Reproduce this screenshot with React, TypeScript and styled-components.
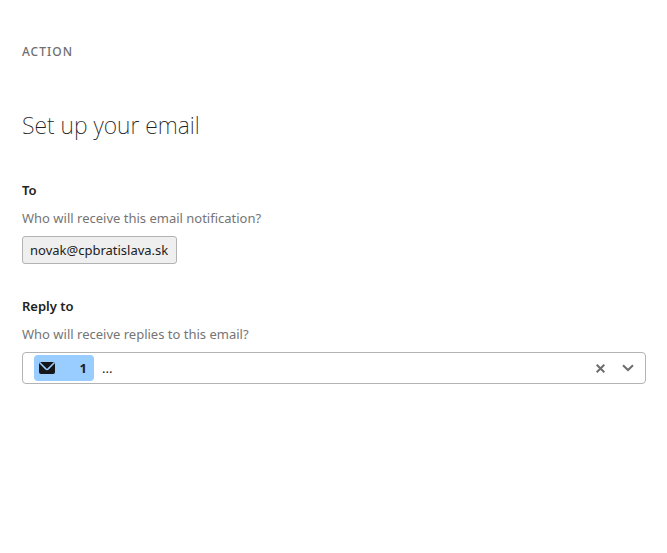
import React from "react";
import styled, { createGlobalStyle } from "styled-components";

const GlobalStyle = createGlobalStyle`
  *, *::before, *::after { box-sizing: border-box; }
  body {
    margin: 0;
    background: #fff;
    color: #212121;
    font-family: "Noto Sans", "Open Sans", sans-serif;
    font-size: 13px;
    line-height: 20px;
  }
  button, input { font: inherit; color: inherit; }
`;

const Page = styled.main`
  padding: 42px 21px 42px 22px;
`;

const Eyebrow = styled.p`
  margin: 0 0 48px;
  color: #6e6e6e;
  font-size: 12px;
  font-weight: 500;
  letter-spacing: 1px;
  text-transform: uppercase;
`;

const Title = styled.h1`
  margin: 0;
  font-size: 23px;
  font-weight: 200;
  line-height: 30px;
`;

const Field = styled.section`
  display: flex;
  flex-direction: column;
  align-items: flex-start;
  margin-top: 40px;

  & + & { margin-top: 32px; }
`;

const Label = styled.label`
  font-weight: 600;
`;

const Hint = styled.p`
  margin: 8px 0;
  color: #757575;
`;

const Recipient = styled.button`
  height: 28px;
  padding: 0 8px 0 7px;
  border: 1px solid #b3b3b3;
  border-radius: 3px;
  background: #efefef;
`;

const ComboBox = styled.div`
  display: flex;
  align-items: center;
  align-self: stretch;
  height: 32px;
  padding: 0 9px 0 11px;
  border: 1px solid #b3b3b3;
  border-radius: 4px;
`;

const Token = styled.span`
  display: flex;
  align-items: center;
  justify-content: space-between;
  width: 60px;
  height: 26px;
  padding: 0 7px 0 5px;
  border-radius: 4px;
  background: #99ccff;
  font-weight: 700;
`;

const ComboInput = styled.input`
  flex: 1;
  min-width: 0;
  padding: 0 8px;
  border: 0;
  outline: 0;
  background: none;
`;

const IconButton = styled.button`
  display: flex;
  align-items: center;
  justify-content: center;
  width: 16px;
  height: 24px;
  padding: 0;
  border: 0;
  background: none;
  color: #6e6e6e;

  & + & { margin-left: 12px; }
`;

const MailIcon = () => (
  <svg width="16" height="12" viewBox="0 0 16 12" aria-hidden="true">
    <rect width="16" height="12" rx="2" fill="#141619" />
    <path d="M0.5 0.5L6.8 6.9Q8 8 9.2 6.9L15.5 0.5" fill="none" stroke="#99ccff" strokeWidth="1.5" />
  </svg>
);

const ClearIcon = () => (
  <svg width="10" height="10" viewBox="0 0 10 10" aria-hidden="true">
    <path d="M1.7 1.7L9.3 9.3M9.3 1.7L1.7 9.3" stroke="currentColor" strokeWidth="2" />
  </svg>
);

const ChevronIcon = () => (
  <svg width="12" height="8" viewBox="0 0 12 8" aria-hidden="true">
    <path d="M1 1.2L6 6L11 1.2" fill="none" stroke="currentColor" strokeWidth="2" />
  </svg>
);

export default function App() {
  return (
    <>
      <GlobalStyle />
      <Page>
        <Eyebrow>Action</Eyebrow>
        <Title>Set up your email</Title>
        <Field>
          <Label id="to-label" htmlFor="to">To</Label>
          <Hint id="to-hint">Who will receive this email notification?</Hint>
          <Recipient id="to" type="button" aria-labelledby="to-label to" aria-describedby="to-hint">
            novak@cpbratislava.sk
          </Recipient>
        </Field>
        <Field>
          <Label htmlFor="reply-to">Reply to</Label>
          <Hint id="reply-hint">Who will receive replies to this email?</Hint>
          <ComboBox>
            <Token>
              <MailIcon />
              1
            </Token>
            <ComboInput id="reply-to" type="text" defaultValue="..." aria-describedby="reply-hint" />
            <IconButton type="button" aria-label="Clear">
              <ClearIcon />
            </IconButton>
            <IconButton type="button" aria-label="Show options">
              <ChevronIcon />
            </IconButton>
          </ComboBox>
        </Field>
      </Page>
    </>
  );
}
